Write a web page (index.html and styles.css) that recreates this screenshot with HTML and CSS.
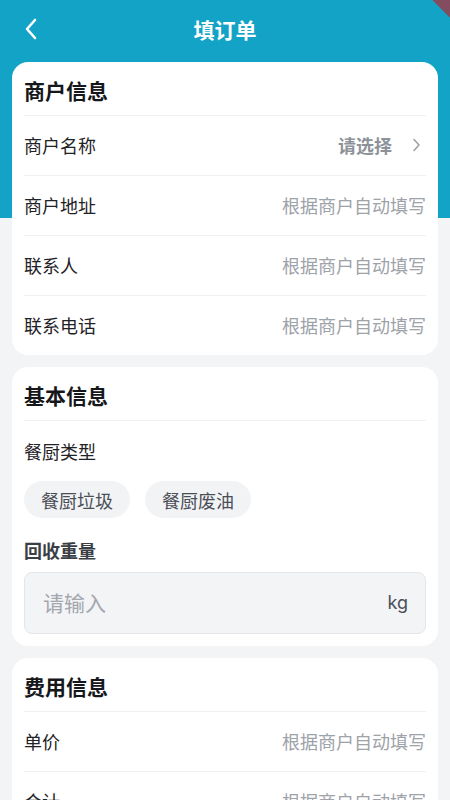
FILE: index.html
```html
<!DOCTYPE html>
<html lang="zh-CN">
<head>
<meta charset="utf-8">
<meta name="viewport" content="width=450">
<title>填订单</title>
<link rel="stylesheet" href="styles.css">
</head>
<body>
<div class="page">
  <div class="debug-banner"></div>
  <header class="nav">
    <span class="nav-back">
      <svg width="14" height="22" viewBox="0 0 14 22"><path d="M11 2 L3 11 L11 20" fill="none" stroke="#fff" stroke-width="2.6" stroke-linecap="round" stroke-linejoin="round"/></svg>
    </span>
    <h1 class="nav-title">填订单</h1>
    <span class="nav-spacer"></span>
  </header>

  <main class="content">
    <section class="card">
      <div class="card-title">商户信息</div>
      <div class="row">
        <span class="row-label">商户名称</span>
        <span class="row-select">请选择
          <svg class="row-arrow" width="9" height="14" viewBox="0 0 9 14"><path d="M2 1.5 L7 7 L2 12.5" fill="none" stroke="#9aa0a8" stroke-width="1.5" stroke-linecap="round" stroke-linejoin="round"/></svg>
        </span>
      </div>
      <div class="row">
        <span class="row-label">商户地址</span>
        <span class="row-value">根据商户自动填写</span>
      </div>
      <div class="row">
        <span class="row-label">联系人</span>
        <span class="row-value">根据商户自动填写</span>
      </div>
      <div class="row">
        <span class="row-label">联系电话</span>
        <span class="row-value">根据商户自动填写</span>
      </div>
    </section>

    <section class="card card-basic">
      <div class="card-title">基本信息</div>
      <div class="field-label">餐厨类型</div>
      <div class="chips">
        <span class="chip">餐厨垃圾</span>
        <span class="chip">餐厨废油</span>
      </div>
      <div class="field-label strong">回收重量</div>
      <div class="input">
        <span class="input-placeholder">请输入</span>
        <span class="input-unit">kg</span>
      </div>
    </section>

    <section class="card">
      <div class="card-title">费用信息</div>
      <div class="row">
        <span class="row-label">单价</span>
        <span class="row-value">根据商户自动填写</span>
      </div>
      <div class="row">
        <span class="row-label">合计</span>
        <span class="row-value">根据商户自动填写</span>
      </div>
    </section>
  </main>
</div>
</body>
</html>
```
FILE: styles.css
```css
* { box-sizing: border-box; }
html, body {
  margin: 0;
  padding: 0;
  width: 450px;
  height: 800px;
  overflow: hidden;
  font-family: "Noto Sans CJK SC", "Noto Sans", sans-serif;
  color: #1b1d21;
}
.page {
  position: relative;
  min-height: 800px;
  background: linear-gradient(#13a3c7 0, #13a3c7 218px, #f3f4f6 218px);
  overflow: hidden;
}
.debug-banner {
  position: absolute;
  top: -6px;
  right: -42px;
  width: 100px;
  height: 13px;
  background: #983d4c;
  opacity: 0.85;
  transform: rotate(45deg);
  transform-origin: center;
}
.nav {
  height: 58px;
  display: flex;
  align-items: center;
  justify-content: space-between;
  padding: 0 24px;
  margin-bottom: 4px;
}
.nav-back {
  width: 40px;
  display: flex;
  align-items: center;
}
.nav-spacer { width: 40px; }
.nav-title {
  margin: 0;
  font-size: 21px;
  font-weight: 700;
  color: #fff;
  line-height: 26px;
}
.content {
  display: flex;
  flex-direction: column;
  gap: 12px;
  padding: 0 12px;
}
.card {
  background: #fff;
  border-radius: 16px;
  padding: 0 12px;
}
.card-title {
  font-size: 21px;
  font-weight: 700;
  line-height: 26px;
  padding: 15px 0 12px;
  border-bottom: 1px solid #f0f1f3;
  color: #15171a;
}
.row {
  height: 60px;
  display: flex;
  align-items: center;
  justify-content: space-between;
  border-bottom: 1px solid #f0f1f3;
  font-size: 18px;
  padding-bottom: 1px;
}
.row:last-child {
  border-bottom: none;
  height: 59px;
}
.row-label { color: #1f2226; }
.row-value { color: #9ea2a9; }
.row-select {
  display: flex;
  align-items: center;
  gap: 20px;
  color: #8d929a;
  font-weight: 600;
}
.row-arrow { margin-right: 5px; }
.card-basic { padding-bottom: 12px; }
.field-label {
  font-size: 18px;
  line-height: 26px;
  margin-top: 17px;
  color: #1f2226;
}
.field-label.strong {
  font-weight: 700;
  color: #3a3e45;
  margin-top: 19px;
}
.chips {
  display: flex;
  gap: 15px;
  margin-top: 17px;
}
.chip {
  height: 37px;
  padding: 0 17px;
  border-radius: 19px;
  background: #f2f3f5;
  display: flex;
  align-items: center;
  font-size: 18px;
  color: #4a4e55;
}
.input {
  margin-top: 9px;
  height: 62px;
  border: 1px solid #e4e6e9;
  background: #f3f4f6;
  border-radius: 8px;
  display: flex;
  align-items: center;
  justify-content: space-between;
  padding: 0 17px 2px 18px;
}
.input-placeholder {
  font-size: 21px;
  color: #a3a7ae;
}
.input-unit {
  font-size: 18px;
  color: #4a4e55;
  font-family: "Inter", "Noto Sans", sans-serif;
}
```
